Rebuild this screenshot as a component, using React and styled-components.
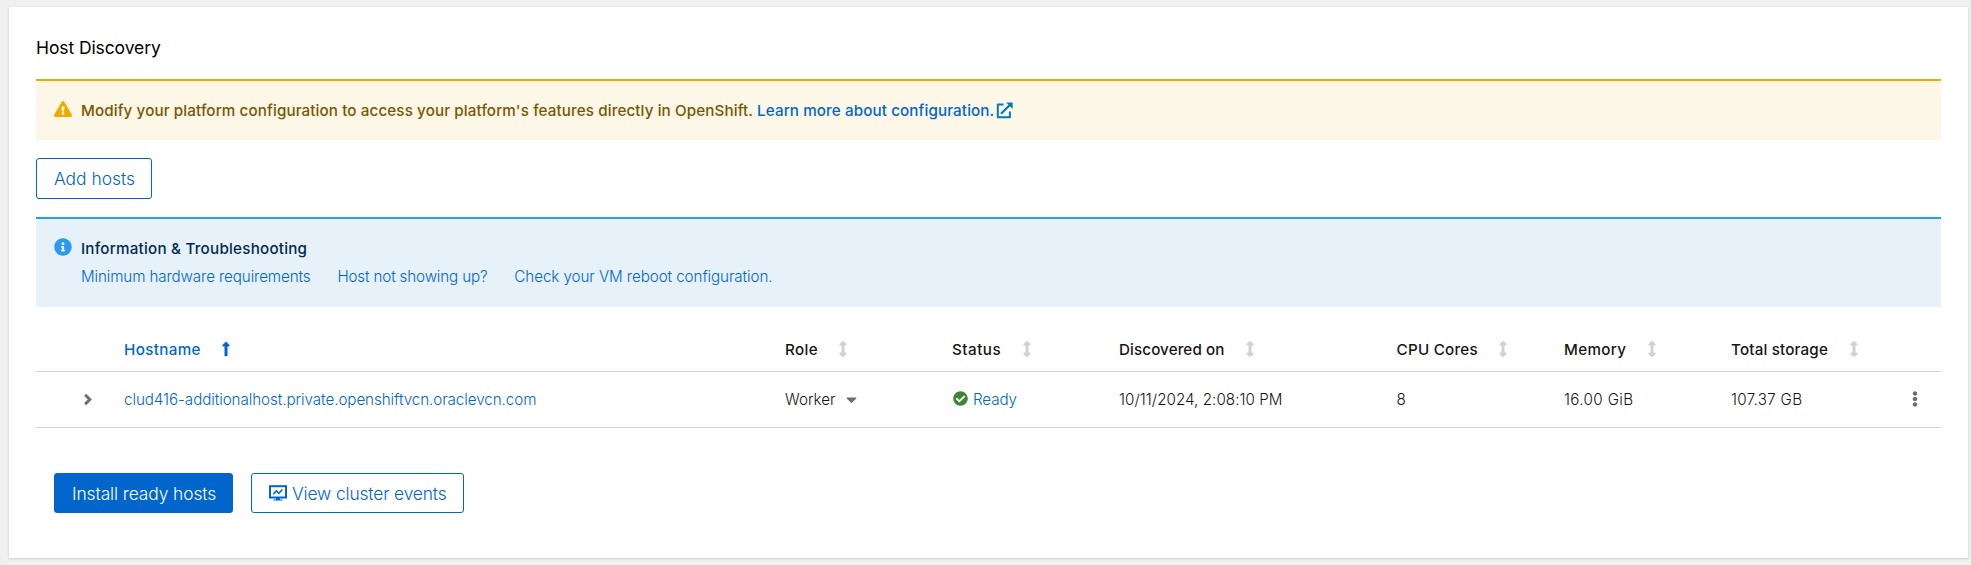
import React from 'react';
import styled, { createGlobalStyle, css } from 'styled-components';
import {
  FaAngleRight,
  FaArrowsAltV,
  FaCaretDown,
  FaCheckCircle,
  FaEllipsisV,
  FaExclamationTriangle,
  FaInfoCircle,
  FaLongArrowAltUp,
} from 'react-icons/fa';

const GlobalStyle = createGlobalStyle`
  *, *::before, *::after { box-sizing: border-box; }
  body {
    margin: 0;
    background: #f0f0f0;
    color: #151515;
    font-family: Inter, "Liberation Sans", sans-serif;
    font-size: 15.2px;
    font-weight: 300;
  }
`;

const Page = styled.main`
  height: 565px;
  padding: 7px 3px 7px 9px;
  overflow: hidden;
`;

const Card = styled.section`
  height: 551px;
  padding: 0 27px;
  background: #fff;
  box-shadow: 0 1px 2px rgba(3, 3, 3, 0.12), 0 0 2px rgba(3, 3, 3, 0.06);
`;

const Label = styled.span`
  white-space: pre;
  letter-spacing: ${(p) => p.$track || 0}px;
`;

const Title = styled.h2`
  margin: 0;
  height: 72px;
  padding-top: 29px;
  color: #000;
  font-size: 17.5px;
  font-weight: 400;
  line-height: 24px;
  letter-spacing: -0.1px;
`;

const tones = {
  warning: css`
    height: 61px;
    border-top: 2px solid #f0ab00;
    background: #fdf7e7;
    color: #795600;
    --tone: #f0ab00;
  `,
  info: css`
    height: 90px;
    border-top: 2px solid #2b9af3;
    background: #e7f1fa;
    color: #002952;
    --tone: #2b9af3;
  `,
};

const Alert = styled.div`
  display: flex;
  align-items: flex-start;
  padding: 0 18px;
  ${(p) => tones[p.$tone]}
`;

const AlertIcon = styled.span`
  display: flex;
  width: 18px;
  margin: 19px 9px 0 0;
  color: var(--tone);

  svg {
    width: 18px;
    height: 18px;
  }
`;

const AlertBody = styled.div`
  padding-top: 16px;
`;

const AlertTitle = styled.div`
  display: flex;
  align-items: center;
  font-weight: 500;
  line-height: 28px;
`;

const Link = styled.a`
  color: #06c;
  text-decoration: none;
  white-space: pre;
  letter-spacing: ${(p) => p.$track || 0}px;
`;

const LinkList = styled.div`
  display: flex;
  gap: 27px;
  line-height: 28px;
`;

const ExternalIcon = styled.svg`
  width: 17px;
  height: 17px;
  margin: 0 0 1px 2px;
  color: #007bba;
`;

const Toolbar = styled.div`
  display: flex;
  height: 77px;
  padding-top: 18px;
`;

const Button = styled.button`
  display: inline-flex;
  align-items: center;
  height: ${(p) => p.$height || 40}px;
  width: ${(p) => p.$width}px;
  padding: 0 0 0 17px;
  border: 1px solid #06c;
  border-radius: 3px;
  background: ${(p) => (p.$primary ? '#06c' : '#fff')};
  color: ${(p) => (p.$primary ? '#fff' : '#06c')};
  font: 300 17.4px Inter, "Liberation Sans", sans-serif;

  svg {
    width: 18px;
    height: 16px;
    margin: 0 5px 1px 0;
  }
`;

const Row = styled.div`
  display: grid;
  grid-template-columns: 88px 661px 167px 167px 277.5px 167.5px 167px 140px 1fr;
  align-items: center;
  border-bottom: 1px solid #d2d2d2;
`;

const HeaderRow = styled(Row)`
  height: 65px;
  padding-top: 21px;
  font-weight: 500;
`;

const BodyRow = styled(Row)`
  height: 56px;
`;

const HeaderCell = styled.div`
  display: flex;
  align-items: center;
  gap: 21.5px;
  color: ${(p) => (p.$sorted ? '#06c' : 'inherit')};
`;

const SortIcon = styled.span`
  display: flex;
  margin-top: -2px;
  color: ${(p) => (p.$sorted ? '#06c' : '#d2d2d2')};

  svg {
    width: 8px;
    height: 16px;
    stroke: currentColor;
    stroke-width: 14px;
  }
`;

const Cell = styled.div`
  display: flex;
  align-items: center;
`;

const ToggleCell = styled(Cell)`
  padding-left: 47px;
  color: #6a6e73;

  svg {
    width: 10px;
    height: 17px;
    stroke: currentColor;
    stroke-width: 16px;
  }
`;

const ActionsCell = styled(Cell)`
  justify-content: flex-end;
  padding-right: 22px;
  color: #6a6e73;

  svg {
    width: 8px;
    height: 16px;
    margin-bottom: 2px;
  }
`;

const Caret = styled(FaCaretDown)`
  width: 11px;
  height: 17px;
  margin-left: 11px;
  color: #6a6e73;
`;

const ReadyIcon = styled(FaCheckCircle)`
  width: 15px;
  height: 15px;
  margin: 0 5px 2px 1px;
  color: #3e8635;
`;

const Footer = styled.footer`
  display: flex;
  gap: 18px;
  padding: 45px 18px 0;
`;

const columns = [
  { name: 'Hostname', track: 0.35, sorted: true },
  { name: 'Role', track: 0.35 },
  { name: 'Status', track: 0.5 },
  { name: 'Discovered on', track: 0.1 },
  { name: 'CPU Cores', track: 0.25 },
  { name: 'Memory', track: 0.35 },
  { name: 'Total storage', track: 0.17 },
];

function MonitorIcon() {
  return (
    <svg viewBox="0 0 18 16" fill="none">
      <rect x="1" y="1.2" width="16" height="11.3" stroke="currentColor" strokeWidth="2" />
      <path d="M4.3 9.2 7.3 5.9 9.8 8.4 13.4 4.4" stroke="currentColor" strokeWidth="1.5" />
      <path d="M7 13h4v1.4h2.5v1h-9v-1H7z" fill="currentColor" />
    </svg>
  );
}

function ExternalLink() {
  return (
    <ExternalIcon viewBox="0 0 17 17" fill="none">
      <path d="M7.5 2.5H1.8v12.8h12.1V9.5" stroke="currentColor" strokeWidth="2" strokeLinejoin="round" />
      <path d="M5 11.8 13.6 3.2" stroke="currentColor" strokeWidth="2.2" />
      <path d="M10.2.6H16.6V7z" fill="currentColor" />
    </ExternalIcon>
  );
}

export default function App() {
  return (
    <Page>
      <GlobalStyle />
      <Card>
        <Title>Host Discovery</Title>
        <Alert $tone="warning">
          <AlertIcon><FaExclamationTriangle /></AlertIcon>
          <AlertBody>
            <AlertTitle>
              <Label $track={0.114}>
                {"Modify your platform configuration to access your platform's features directly in OpenShift. "}
              </Label>
              <Link $track={0.11}>Learn more about configuration.</Link>
              <ExternalLink />
            </AlertTitle>
          </AlertBody>
        </Alert>
        <Toolbar>
          <Button $width={116} $height={41}>Add hosts</Button>
        </Toolbar>
        <Alert $tone="info">
          <AlertIcon><FaInfoCircle /></AlertIcon>
          <AlertBody>
            <AlertTitle><Label $track={0.23}>Information &amp; Troubleshooting</Label></AlertTitle>
            <LinkList>
              <Link $track={-0.12}>Minimum hardware requirements</Link>
              <Link $track={-0.16}>Host not showing up?</Link>
              <Link $track={-0.08}>Check your VM reboot configuration.</Link>
            </LinkList>
          </AlertBody>
        </Alert>
        <HeaderRow>
          <span />
          {columns.map((c) => (
            <HeaderCell key={c.name} $sorted={c.sorted}>
              <Label $track={c.track}>{c.name}</Label>
              <SortIcon $sorted={c.sorted}>
                {c.sorted ? <FaLongArrowAltUp /> : <FaArrowsAltV />}
              </SortIcon>
            </HeaderCell>
          ))}
          <span />
        </HeaderRow>
        <BodyRow>
          <ToggleCell><FaAngleRight /></ToggleCell>
          <Cell><Link $track={-0.07}>clud416-additionalhost.private.openshiftvcn.oraclevcn.com</Link></Cell>
          <Cell><Label>Worker</Label><Caret /></Cell>
          <Cell><ReadyIcon /><Link $track={-0.1}>Ready</Link></Cell>
          <Cell><Label $track={0.04}>10/11/2024, 2:08:10 PM</Label></Cell>
          <Cell><Label>8</Label></Cell>
          <Cell><Label $track={0.35}>16.00 GiB</Label></Cell>
          <Cell><Label $track={0.3}>107.37 GB</Label></Cell>
          <ActionsCell><FaEllipsisV /></ActionsCell>
        </BodyRow>
        <Footer>
          <Button $primary $width={179}>
            <Label $track={-0.1}>Install ready hosts</Label>
          </Button>
          <Button $width={213}>
            <MonitorIcon />
            <Label $track={-0.14}>View cluster events</Label>
          </Button>
        </Footer>
      </Card>
    </Page>
  );
}
